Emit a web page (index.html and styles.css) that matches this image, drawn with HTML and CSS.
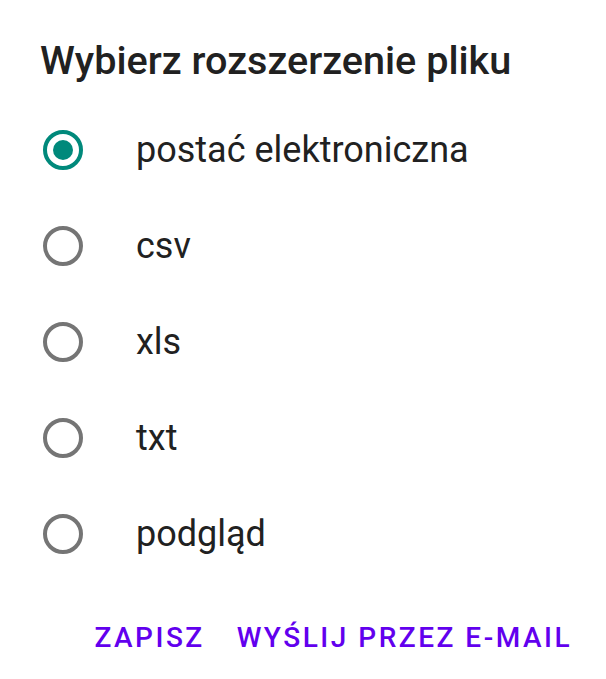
FILE: index.html
```html
<!DOCTYPE html>
<html lang="pl">
<head>
  <meta charset="UTF-8">
  <meta name="viewport" content="width=device-width, initial-scale=1.0">
  <title>Wybierz rozszerzenie pliku</title>
  <link rel="stylesheet" href="styles.css">
</head>
<body>
  <!-- Dialog -->
  <div class="dialog">
    <h1 class="dialog-title">Wybierz rozszerzenie pliku</h1>

    <div class="choices">
      <label class="choice">
        <input type="radio" name="ext" value="pdf" checked>
        <span class="radio"></span>
        <span class="choice-text">postać elektroniczna</span>
      </label>
      <label class="choice">
        <input type="radio" name="ext" value="csv">
        <span class="radio"></span>
        <span class="choice-text">csv</span>
      </label>
      <label class="choice">
        <input type="radio" name="ext" value="xls">
        <span class="radio"></span>
        <span class="choice-text">xls</span>
      </label>
      <label class="choice">
        <input type="radio" name="ext" value="txt">
        <span class="radio"></span>
        <span class="choice-text">txt</span>
      </label>
      <label class="choice">
        <input type="radio" name="ext" value="preview">
        <span class="radio"></span>
        <span class="choice-text">podgląd</span>
      </label>
    </div>

    <div class="actions">
      <button class="action-btn" type="button">Zapisz</button>
      <button class="action-btn" type="button">Wyślij przez e-mail</button>
    </div>
  </div>
</body>
</html>
```

FILE: styles.css
```css
html, body {
  margin: 0;
  padding: 0;
  background: #fff;
  font-family: Roboto, 'Noto Sans', Arial, sans-serif;
}
/* Dialog */
.dialog {
  width: 606px;
  height: 679px;
  display: flex;
  flex-direction: column;
  background: #fff;
}
.dialog-title {
  margin: 0;
  padding: 37px 40px 0 40px;
  font-size: 39.6px;
  font-weight: 500;
  line-height: 48px;
  color: #212121;
}
/* Radio list */
.choices {
  display: flex;
  flex-direction: column;
  padding-top: 17px;
}
.choice {
  display: flex;
  align-items: center;
  height: 96px;
  padding-left: 43px;
  cursor: pointer;
}
.choice input {
  display: none;
}
.choice .radio {
  box-sizing: border-box;
  width: 40px;
  height: 40px;
  border: 4px solid #757575;
  border-radius: 50%;
  display: flex;
  align-items: center;
  justify-content: center;
}
.choice input:checked + .radio {
  border-color: #00897b;
}
.choice input:checked + .radio::after {
  content: '';
  width: 20px;
  height: 20px;
  border-radius: 50%;
  background: #00897b;
}
.choice-text {
  margin-left: 53px;
  font-size: 36px;
  line-height: 48px;
  color: #212121;
}
/* Buttons */
.actions {
  display: flex;
  justify-content: flex-end;
  gap: 32px;
  padding: 36px 34px 0 0;
}
.action-btn {
  background: none;
  border: none;
  padding: 0;
  font-family: inherit;
  font-size: 28px;
  font-weight: 500;
  letter-spacing: 2.5px;
  text-transform: uppercase;
  color: #6200ee;
  line-height: 40px;
  cursor: pointer;
}
```
